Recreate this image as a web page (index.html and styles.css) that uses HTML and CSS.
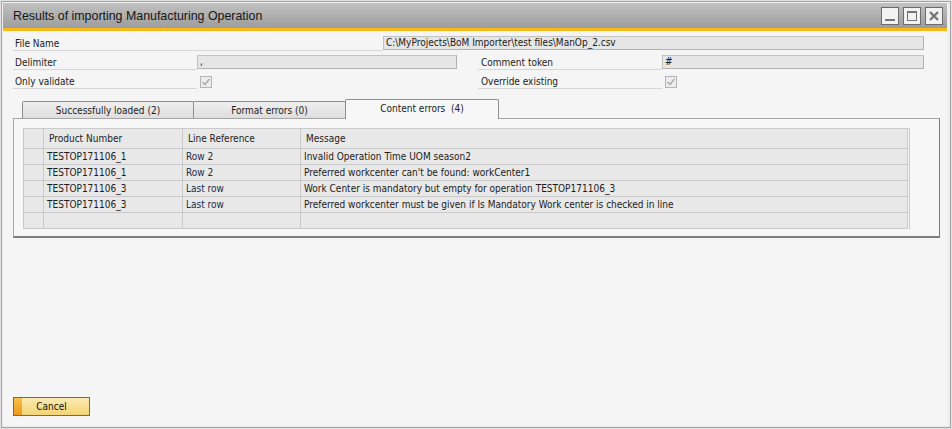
FILE: index.html
```html
<!DOCTYPE html>
<html>
<head>
<meta charset="utf-8">
<link rel="stylesheet" href="styles.css">
</head>
<body>
<div class="window">
  <div class="frame">
    <div class="titlebar">
      <span class="title">Results of importing Manufacturing Operation</span>
      <div class="ctrls">
        <span class="wbtn"><svg width="16" height="16" viewBox="0 0 16 16"><rect x="3" y="11" width="10" height="2" fill="#767676"/></svg></span>
        <span class="wbtn"><svg width="16" height="16" viewBox="0 0 16 16"><rect x="3.5" y="3.5" width="9" height="9" fill="none" stroke="#767676" stroke-width="1"/><rect x="3" y="3" width="10" height="2" fill="#767676"/></svg></span>
        <span class="wbtn"><svg width="16" height="16" viewBox="0 0 16 16"><path d="M4 4 L12 12 M12 4 L4 12" stroke="#767676" stroke-width="2.4"/></svg></span>
      </div>
    </div>
    <div class="accent"></div>
    <div class="content">
      <div class="form">
        <div class="row">
          <span class="label wide">File Name</span>
          <span class="field grow">C:\MyProjects\BoM Importer\test files\ManOp_2.csv</span>
        </div>
        <div class="row">
          <span class="label">Delimiter</span>
          <span class="field f-delim">,</span>
          <span class="label second">Comment token</span>
          <span class="field grow">#</span>
        </div>
        <div class="row">
          <span class="label">Only validate</span>
          <span class="cbwrap"><span class="checkbox"><svg width="10" height="10" viewBox="0 0 10 10"><path d="M1.5 5 L4 7.5 L8.5 2" fill="none" stroke="#a8a8a8" stroke-width="1.3"/></svg></span></span>
          <span class="label second">Override existing</span>
          <span class="cbwrap"><span class="checkbox"><svg width="10" height="10" viewBox="0 0 10 10"><path d="M1.5 5 L4 7.5 L8.5 2" fill="none" stroke="#a8a8a8" stroke-width="1.3"/></svg></span></span>
        </div>
      </div>

      <div class="tabs">
        <span class="tab t1">Successfully loaded (2)</span>
        <span class="tab t2">Format errors (0)</span>
        <span class="tab t3 active">Content errors &nbsp;(4)</span>
      </div>
      <div class="panel">
        <table class="grid">
          <colgroup>
            <col class="c0"><col class="c1"><col class="c2"><col class="c3">
          </colgroup>
          <thead>
            <tr><th></th><th>Product Number</th><th>Line Reference</th><th>Message</th></tr>
          </thead>
          <tbody>
            <tr><td class="rh"></td><td>TESTOP171106_1</td><td class="ref">Row 2</td><td>Invalid Operation Time UOM season2</td></tr>
            <tr><td class="rh"></td><td>TESTOP171106_1</td><td class="ref">Row 2</td><td>Preferred workcenter can't be found: workCenter1</td></tr>
            <tr><td class="rh"></td><td>TESTOP171106_3</td><td class="ref">Last row</td><td>Work Center is mandatory but empty for operation TESTOP171106_3</td></tr>
            <tr><td class="rh"></td><td>TESTOP171106_3</td><td class="ref">Last row</td><td>Preferred workcenter must be given if Is Mandatory Work center is checked in line</td></tr>
            <tr><td class="rh"></td><td></td><td></td><td></td></tr>
          </tbody>
        </table>
      </div>
      <div class="spacer"></div>
      <div class="footer">
        <button class="btn"><span class="btn-strip"></span><span class="btn-text">Cancel</span></button>
      </div>
    </div>
  </div>
</div>
</body>
</html>
```

FILE: styles.css
```css
html, body {
  margin: 0;
  padding: 0;
  background: #ffffff;
}
body {
  font-family: "DejaVu Sans Condensed", "DejaVu Sans", sans-serif;
  font-size: 10px;
  color: #1b1b1b;
}
.window {
  width: 952px;
  height: 429px;
  box-sizing: border-box;
  background: #e4e4e4;
  padding: 1px;
}
.frame {
  height: 100%;
  box-sizing: border-box;
  border: 1px solid #a2a2a2;
  background: #efefef;
  display: flex;
  flex-direction: column;
  padding: 1px 3px 2px 1px;
}
.titlebar {
  height: 25px;
  flex: none;
  background: linear-gradient(#c2c2c2, #9c9c9c);
  display: flex;
  align-items: center;
  justify-content: space-between;
  padding-left: 10px;
}
.title {
  font-family: "Liberation Sans", Arial, sans-serif;
  font-size: 12.4px;
  color: #161616;
}
.ctrls {
  display: flex;
  gap: 4px;
  padding-right: 4px;
  padding-top: 1px;
}
.wbtn {
  width: 16px;
  height: 16px;
  border: 1px solid #6c6c6c;
  background: #f2f2f2;
  display: flex;
}
.accent {
  height: 3px;
  flex: none;
  background: #f8b915;
}
.content {
  flex: 1;
  background: #f5f5f5;
  display: flex;
  flex-direction: column;
  padding: 0 0 0 10px;
}
.form {
  display: flex;
  flex-direction: column;
  padding-right: 23px;
  padding-top: 1px;
}
.row {
  height: 19px;
  display: flex;
  align-items: flex-end;
}
.label {
  width: 184px;
  box-sizing: border-box;
  border-bottom: 1px solid #d6d6d6;
  padding-left: 2px;
  height: 16px;
  line-height: 18px;
  flex: none;
}
.label.wide {
  width: 370px;
}
.label.second {
  margin-left: 21px;
  padding-left: 3px;
}
.field {
  box-sizing: border-box;
  margin-bottom: 1px;
  border: 1px solid #c2c2c2;
  border-right-color: #b2b2b2;
  border-bottom-color: #b2b2b2;
  background: #e6e6e6;
  line-height: 12px;
  padding-left: 2px;
  white-space: nowrap;
  overflow: hidden;
  height: 14px;
}
.field.grow {
  flex: 1;
}
.f-delim {
  width: 260px;
  flex: none;
}
.cbwrap {
  width: 260px;
  flex: none;
  height: 19px;
  display: flex;
  align-items: flex-end;
}
.cbwrap:last-child {
  flex: 1;
}
.checkbox {
  margin-left: 3px;
  margin-bottom: 1px;
  width: 12px;
  height: 12px;
  box-sizing: border-box;
  border: 1px solid #b4b4b4;
  background: #ededed;
  display: flex;
  align-items: center;
  justify-content: center;
}
.tabs {
  margin-top: 10px;
  margin-left: 9px;
  display: flex;
  align-items: flex-end;
  height: 19px;
  position: relative;
  z-index: 1;
}
.tab {
  box-sizing: border-box;
  height: 17px;
  border: 1px solid #8e8e8e;
  border-bottom: none;
  border-radius: 2px 2px 0 0;
  background: linear-gradient(#efefef, #dedede);
  text-align: center;
  line-height: 17px;
  margin-right: -1px;
}
.t1 { width: 172px; }
.t2 { width: 153px; }
.t3 { width: 154px; }
.tab.active {
  height: 20px;
  background: #f7f7f7;
  line-height: 18px;
  margin-bottom: -1px;
  padding-bottom: 1px;
}
.panel {
  margin-right: 7px;
  border: 1px solid #a6a6a6;
  border-right-color: #7c7c7c;
  border-bottom: 2px solid #7c7c7c;
  background: #f7f7f7;
  padding: 9px 0 7px 9px;
}
.grid {
  border-collapse: collapse;
  table-layout: fixed;
  width: 887px;
  border-right: 3px double #cacaca;
}
.c0 { width: 20px; }
.c1 { width: 139px; }
.c2 { width: 118px; }
.c3 { width: auto; }
.grid th, .grid td {
  border: 1px solid #cacaca;
  background: #e8e8e8;
  text-align: left;
  font-weight: normal;
  white-space: nowrap;
  overflow: hidden;
  padding: 0 0 0 3px;
}
.grid th {
  height: 19px;
  padding-left: 5px;
  color: #222;
}
.grid td {
  height: 15px;
  line-height: 14px;
}
.grid td.ref {
  color: #1e2c4a;
}
.spacer {
  flex: 1;
}
.footer {
  padding: 0 0 9px 0;
}
.btn {
  width: 77px;
  height: 19px;
  padding: 0;
  border: 1px solid #6a6a6a;
  background: linear-gradient(#fbeab0, #f3d475);
  display: flex;
  align-items: stretch;
  font-family: "DejaVu Sans Condensed", "DejaVu Sans", sans-serif;
  font-size: 10px;
  color: #111;
}
.btn-strip {
  width: 8px;
  background: linear-gradient(#f6c24a, #ee9a1a);
}
.btn-text {
  flex: 1;
  line-height: 17px;
  text-align: center;
  padding-right: 8px;
}
```
